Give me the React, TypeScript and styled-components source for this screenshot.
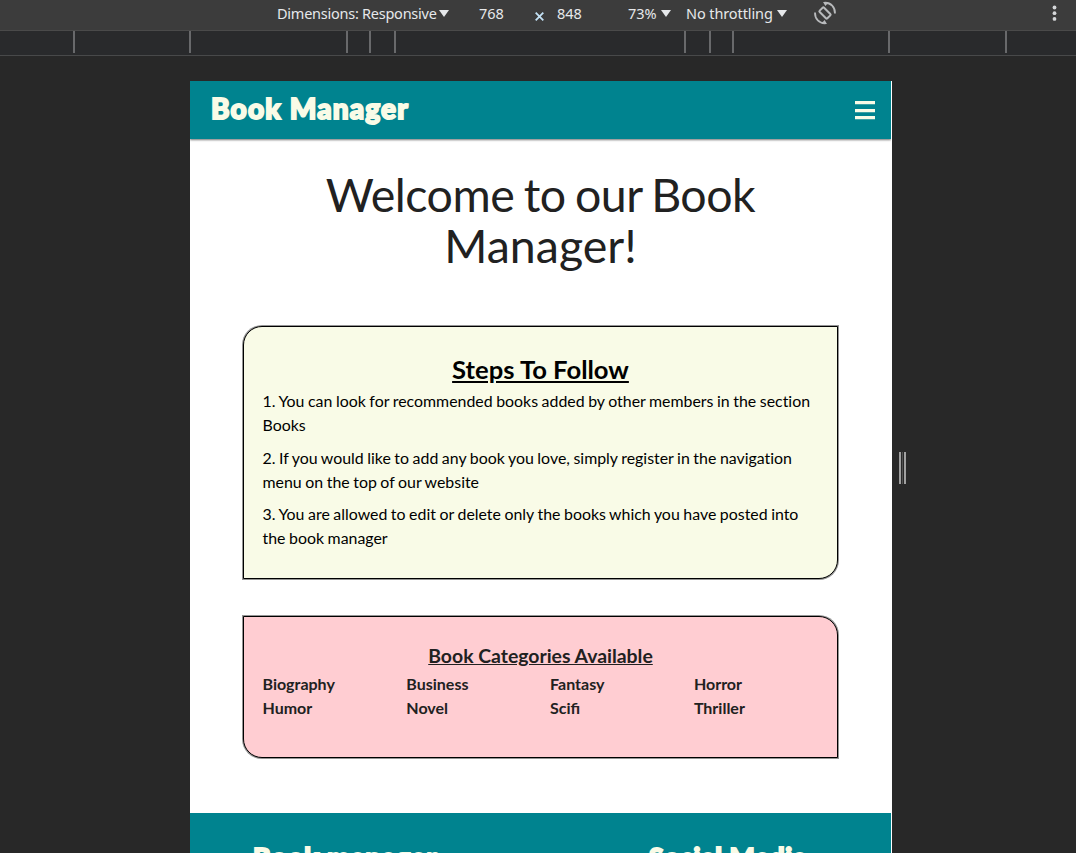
import React from 'react';
import styled, { createGlobalStyle } from 'styled-components';

const teal = '#00838f';
const cream = '#f9fbe7';

const GlobalStyle = createGlobalStyle`
  * { box-sizing: border-box; }
  html, body { margin: 0; height: 100%; overflow: hidden; background: #282828; }
  h1, h2, h3, p { margin: 0; font-weight: 400; }
`;

const Screen = styled.div`
  width: 1076px;
  height: 853px;
  overflow: hidden;
  display: flex;
  flex-direction: column;
  background: #282828;
`;

const Toolbar = styled.div`
  flex: none;
  height: 31px;
  display: flex;
  align-items: center;
  padding: 0 15px 4px 277px;
  background: #3c3c3c;
  border-bottom: 1px solid #4a4a4a;
  font: 14.5px/20px "Noto Sans", "Open Sans", sans-serif;
  color: #e6e8ea;
  white-space: nowrap;
`;

const ToolItem = styled.div<{ $width: number; $spacing?: number }>`
  flex: none;
  width: ${(p) => p.$width}px;
  display: flex;
  align-items: center;
  justify-content: space-between;
  letter-spacing: ${(p) => p.$spacing ?? 0}px;
`;

const ToolGap = styled.div<{ $width: number }>`
  flex: none;
  width: ${(p) => p.$width}px;
`;

const Spacer = styled.div`
  flex: 1;
`;

const Ruler = styled.div`
  flex: none;
  height: 25px;
  display: flex;
  background: #292a2c;
  border-bottom: 1px solid #48494a;
`;

const Segment = styled.div<{ $width: number }>`
  flex: none;
  width: ${(p) => p.$width}px;
  height: 22px;
  border-right: 2px solid #68696b;
`;

const Stage = styled.div`
  flex: 1;
  min-height: 0;
  display: flex;
  padding: 25px 0 0 190px;
`;

const Page = styled.main`
  width: 702px;
  display: flex;
  flex-direction: column;
  background: #fff;
  border-right: 1px solid #fff;
  overflow: hidden;
  font-family: Lato, sans-serif;
`;

const ResizeHandle = styled.div`
  width: 7px;
  height: 32px;
  margin: 371px 0 0 7px;
  border: solid #a0a0a0;
  border-width: 0 2px;
  background: linear-gradient(90deg, #282828 0 1px, #505050 1px 2px, #282828 2px);
`;

const Nav = styled.nav`
  flex: none;
  height: 58px;
  display: flex;
  align-items: center;
  justify-content: space-between;
  padding: 0 16px 0 21px;
  background: ${teal};
  color: ${cream};
  box-shadow: 0 1px 2px rgba(0, 0, 0, 0.55);
`;

const Brand = styled.div<{ $size: number; $spacing: number; $lift?: number }>`
  font: 900 ${(p) => p.$size}px/36px Lato, sans-serif;
  letter-spacing: ${(p) => p.$spacing}px;
  margin-bottom: ${(p) => p.$lift ?? 0}px;
  -webkit-text-stroke: 1.9px currentColor;
  white-space: nowrap;
`;

const MenuIcon = styled.div`
  width: 20px;
  height: 18px;
  display: flex;
  flex-direction: column;
  justify-content: space-between;
`;

const MenuBar = styled.span`
  height: 3px;
  background: ${cream};
  box-shadow: 0 0.5px 0 rgba(249, 251, 231, 0.5);
`;

const Welcome = styled.h1`
  flex: none;
  margin: 30px 0 0;
  height: 157px;
  text-align: center;
  font-size: 46.5px;
  line-height: 50.7px;
  color: #212121;
`;

const WelcomeLine = styled.span<{ $spacing: number }>`
  display: block;
  letter-spacing: ${(p) => p.$spacing}px;
  word-spacing: -2px;
`;

const Card = styled.section<{ $height: number; $color: string; $corners: string }>`
  flex: none;
  width: 595px;
  height: ${(p) => p.$height}px;
  margin: 0 0 37px 53px;
  padding: 26px 18.5px 0;
  background: ${(p) => p.$color};
  border: 1px solid #000;
  border-radius: ${(p) => p.$corners};
  box-shadow: 0 0 0 1px rgba(0, 0, 0, 0.42);
`;

const StepsTitle = styled.h2`
  margin-bottom: 4px;
  text-align: center;
  font: 700 25.6px/32px Lato, sans-serif;
  text-decoration: underline;
  color: #000;
`;

const Step = styled.p`
  margin-bottom: 8.7px;
  font-size: 15.9px;
  line-height: 24px;
  word-spacing: -0.5px;
  font-variant-ligatures: none;
  color: #000;
`;

const CategoriesTitle = styled.h3`
  margin-bottom: 3px;
  text-align: center;
  font: 700 19.4px/26px Lato, sans-serif;
  text-decoration: underline;
  color: #212121;
`;

const Categories = styled.div`
  display: grid;
  grid-template-columns: repeat(4, 143.8px);
  font-weight: 700;
  font-size: 16px;
  line-height: 24px;
  color: #212121;
`;

const Footer = styled.footer`
  flex: none;
  height: 80px;
  margin-top: 18px;
  display: flex;
  justify-content: space-between;
  padding: 26px 84px 0 63px;
  background: ${teal};
  color: ${cream};
`;

const Caret = () => (
  <svg width="10" height="7" viewBox="0 0 10 7">
    <path d="M0 0h10L5 7z" fill="#e6e8ea" />
  </svg>
);

const RotateIcon = () => (
  <svg width="24" height="24" viewBox="0 0 24 24" fill="none" stroke="#b8babc" strokeWidth="1.8">
    <rect x="8.9" y="6.6" width="6.2" height="10.8" rx="1" transform="rotate(-45 12 12)" strokeWidth="2" />
    <path d="M11 1.8C18 1.2 22.2 6.2 22 12.5M13 22.2C6 22.8 1.8 17.8 2 11.5" />
    <path d="M10 1l5.5 .4L12.4 5zM14 23l-5.5-.4L11.6 19z" fill="#b8babc" stroke="none" />
  </svg>
);

const MoreIcon = () => (
  <svg width="13" height="18" viewBox="0 0 13 18" fill="#d5d7d9">
    <circle cx="6.5" cy="3.5" r="1.9" />
    <circle cx="6.5" cy="9.2" r="1.9" />
    <circle cx="6.5" cy="14.9" r="1.9" />
  </svg>
);

const CrossIcon = () => (
  <svg width="9" height="9" viewBox="0 0 9 9" stroke="#c3e1f5" strokeWidth="1.8">
    <path d="M.7.7l7.6 7.6M8.3.7L.7 8.3" />
  </svg>
);

const Cross = styled.div`
  width: 9px;
  height: 9px;
  margin: 6px 13px 0 31px;
  display: flex;
`;

const segments = [75, 116, 157, 23, 25, 290, 25, 23, 156, 117];

const steps = [
  ['1. You can look for recommended books added by other members in the section', 'Books'],
  ['2. If you would like to add any book you love, simply register in the navigation', 'menu on the top of our website'],
  ['3. You are allowed to edit or delete only the books which you have posted into', 'the book manager'],
];

const categories = ['Biography', 'Business', 'Fantasy', 'Horror', 'Humor', 'Novel', 'Scifi', 'Thriller'];

export default function App() {
  return (
    <Screen>
      <GlobalStyle />
      <Toolbar>
        <ToolItem $width={172} $spacing={-0.25}>Dimensions: Responsive<Caret /></ToolItem>
        <ToolGap $width={30} />
        <ToolItem $width={25}>768</ToolItem>
        <Cross><CrossIcon /></Cross>
        <ToolItem $width={25}>848</ToolItem>
        <ToolGap $width={46} />
        <ToolItem $width={43}>73%<Caret /></ToolItem>
        <ToolGap $width={15} />
        <ToolItem $width={101} $spacing={-0.1}>No throttling<Caret /></ToolItem>
        <ToolGap $width={26} />
        <RotateIcon />
        <Spacer />
        <MoreIcon />
      </Toolbar>
      <Ruler>
        {segments.map((width, i) => <Segment key={i} $width={width} />)}
      </Ruler>
      <Stage>
        <Page>
          <Nav>
            <Brand $size={28} $spacing={1.2} $lift={4}>Book Manager</Brand>
            <MenuIcon><MenuBar /><MenuBar /><MenuBar /></MenuIcon>
          </Nav>
          <Welcome>
            <WelcomeLine $spacing={-0.5}>Welcome to our Book</WelcomeLine>
            <WelcomeLine $spacing={0}>Manager!</WelcomeLine>
          </Welcome>
          <Card $height={253} $color={cream} $corners="19px 0 19px 0">
            <StepsTitle>Steps To Follow</StepsTitle>
            {steps.map(([first, second]) => (
              <Step key={first}>{first}<br />{second}</Step>
            ))}
          </Card>
          <Card $height={142} $color="#ffcdd2" $corners="0 19px 0 19px">
            <CategoriesTitle>Book Categories Available</CategoriesTitle>
            <Categories>
              {categories.map((name) => <span key={name}>{name}</span>)}
            </Categories>
          </Card>
          <Footer>
            <Brand $size={26.5} $spacing={1.1}>Book manager</Brand>
            <Brand $size={26.5} $spacing={0.6}>Social Media</Brand>
          </Footer>
        </Page>
        <ResizeHandle />
      </Stage>
    </Screen>
  );
}
